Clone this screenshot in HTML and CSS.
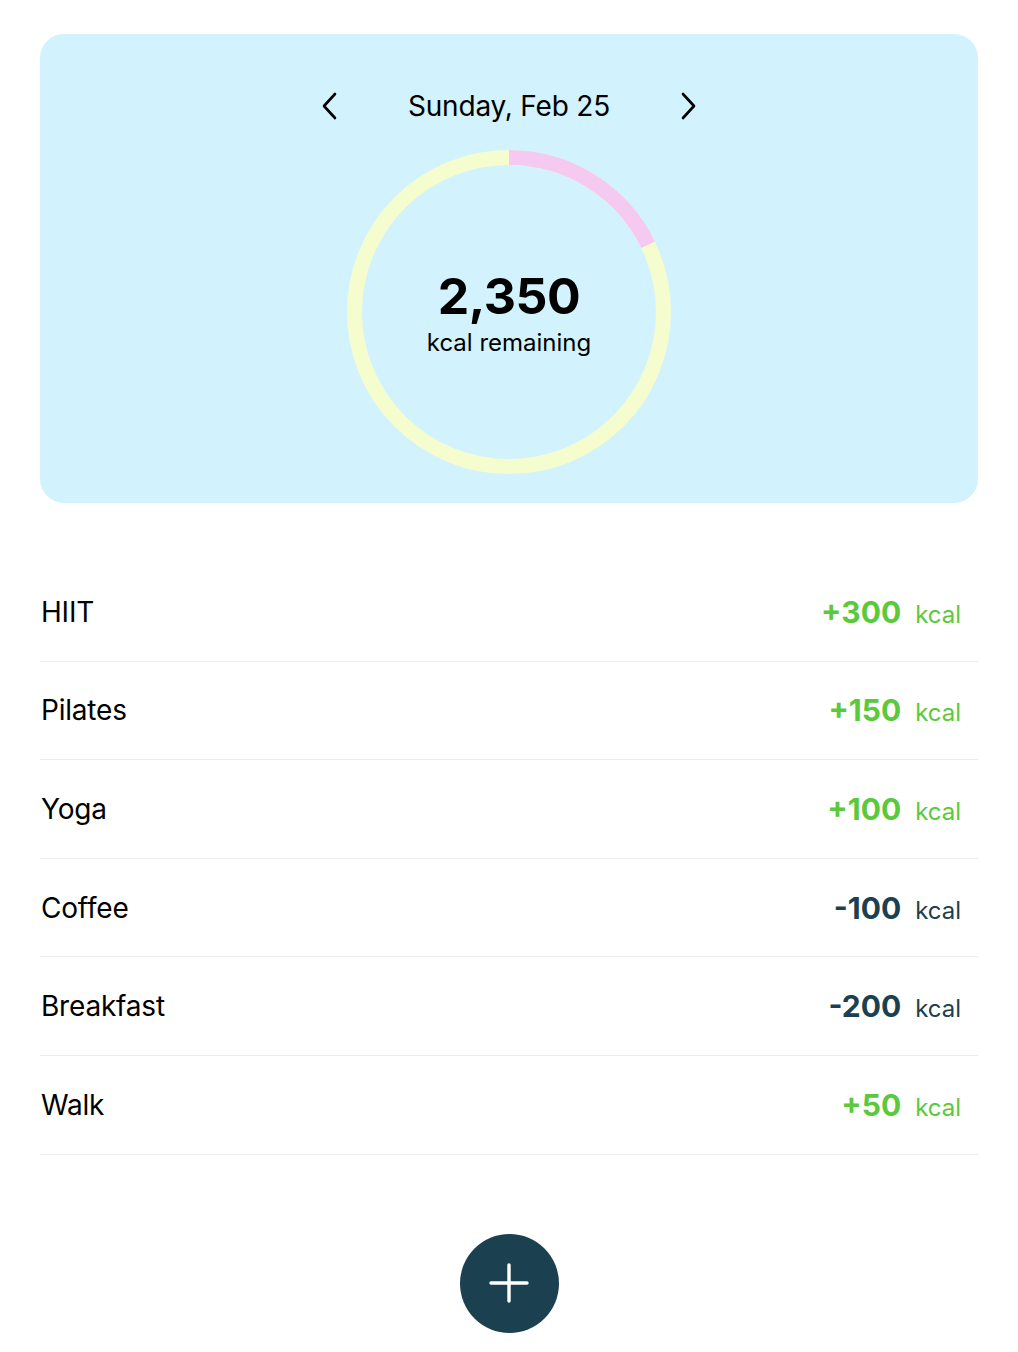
FILE: index.html
```html
<!DOCTYPE html>
<html>
<head>
<meta charset="utf-8">
<link rel="stylesheet" href="styles.css">
</head>
<body>
<div class="page">
  <section class="card">
    <div class="datebar">
      <button class="nav" aria-label="Previous day">
        <svg width="20" height="32" viewBox="0 0 20 32"><path d="M15 4 L4 16 L15 28" fill="none" stroke="#000" stroke-width="2.6" stroke-linecap="round" stroke-linejoin="round"/></svg>
      </button>
      <div class="date">Sunday, Feb 25</div>
      <button class="nav" aria-label="Next day">
        <svg width="20" height="32" viewBox="0 0 20 32"><path d="M5 4 L16 16 L5 28" fill="none" stroke="#000" stroke-width="2.6" stroke-linecap="round" stroke-linejoin="round"/></svg>
      </button>
    </div>
    <div class="ring">
      <svg class="ring-svg" width="324" height="324" viewBox="0 0 324 324">
        <circle cx="162" cy="162" r="154.5" fill="none" stroke="#f5fdcf" stroke-width="15"/>
        <circle cx="162" cy="162" r="154.5" fill="none" stroke="#f5c9f0" stroke-width="15" stroke-dasharray="173 1000" transform="rotate(-90 162 162)"/>
      </svg>
      <div class="ring-text">
        <div class="big">2,350</div>
        <div class="sub">kcal remaining</div>
      </div>
    </div>
  </section>

  <ul class="list">
    <li class="row"><span class="name">HIIT</span><span class="amt pos"><b>+300</b><span class="unit">kcal</span></span></li>
    <li class="row"><span class="name">Pilates</span><span class="amt pos"><b>+150</b><span class="unit">kcal</span></span></li>
    <li class="row"><span class="name">Yoga</span><span class="amt pos"><b>+100</b><span class="unit">kcal</span></span></li>
    <li class="row"><span class="name">Coffee</span><span class="amt neg"><b>-100</b><span class="unit">kcal</span></span></li>
    <li class="row"><span class="name">Breakfast</span><span class="amt neg"><b>-200</b><span class="unit">kcal</span></span></li>
    <li class="row"><span class="name">Walk</span><span class="amt pos"><b>+50</b><span class="unit">kcal</span></span></li>
  </ul>

  <div class="fab-wrap">
    <button class="fab" aria-label="Add">
      <svg width="44" height="44" viewBox="0 0 44 44"><path d="M22 4 V40 M4 22 H40" stroke="#fff" stroke-width="3.4" stroke-linecap="round"/></svg>
    </button>
  </div>
</div>
</body>
</html>
```

FILE: styles.css
```css
* { box-sizing: border-box; }
html, body { margin: 0; padding: 0; background: #fff; }
body {
  font-family: Inter, "Noto Sans", "Liberation Sans", sans-serif;
  color: #000;
}
.page {
  padding: 34px 40px 0 40px;
}
.card {
  background: #d2f3fd;
  border-radius: 24px;
  height: 469px;
  padding-top: 54px;
  display: flex;
  flex-direction: column;
  align-items: center;
}
.datebar {
  display: flex;
  align-items: center;
  justify-content: center;
  gap: 68px;
  height: 36px;
}
.nav {
  background: none;
  border: 0;
  padding: 0;
  width: 20px;
  height: 32px;
  display: flex;
  align-items: center;
  justify-content: center;
  cursor: pointer;
}
.date {
  font-size: 28px;
  font-weight: 400;
  letter-spacing: -0.2px;
}
.ring {
  margin-top: 26px;
  width: 324px;
  height: 324px;
  position: relative;
  display: flex;
  align-items: center;
  justify-content: center;
}
.ring-svg {
  position: absolute;
  left: 0;
  top: 0;
}
.ring-text {
  position: relative;
  text-align: center;
  margin-top: 4px;
}
.big {
  font-size: 50px;
  font-weight: 700;
  line-height: 52px;
  letter-spacing: -0.5px;
}
.sub {
  font-size: 24px;
  line-height: 30px;
  margin-top: 6px;
}
.list {
  list-style: none;
  margin: 60px 0 0 0;
  padding: 0;
}
.row {
  height: 98.6px;
  display: flex;
  align-items: center;
  justify-content: space-between;
  border-bottom: 1.5px solid #ececec;
  padding: 0 17px 0 1px;
}
.name {
  font-size: 28px;
  letter-spacing: -0.2px;
}
.amt {
  display: flex;
  align-items: baseline;
  gap: 14px;
}
.amt b {
  font-size: 30px;
  font-weight: 700;
}
.unit {
  font-size: 24px;
}
.pos { color: #5ac93b; }
.neg { color: #1b4150; }
.fab-wrap {
  display: flex;
  justify-content: center;
  padding-top: 79px;
}
.fab {
  width: 99px;
  height: 99px;
  border-radius: 50%;
  background: #1b4150;
  border: 0;
  padding: 0;
  display: flex;
  align-items: center;
  justify-content: center;
  cursor: pointer;
}
```
